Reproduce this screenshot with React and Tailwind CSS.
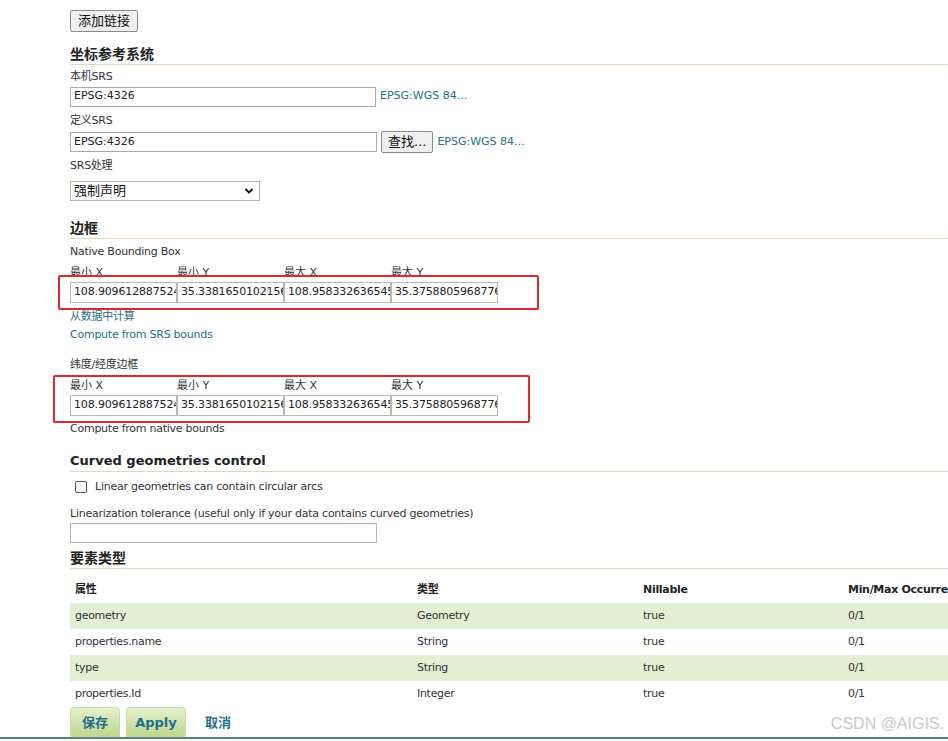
import React from "react"

const font = { fontFamily: '"DejaVu Sans", Verdana, "Noto Sans CJK SC", sans-serif' }

function Label({ children, className = "" }) {
    return (
        <div className={"h-[20px] pt-[2px] flex items-center text-[11px] tracking-[-0.25px] text-[#333] " + className}>
            {children}
        </div>
    )
}

function Heading({ children, className = "" }) {
    return (
        <div className={"h-[21px] flex items-center font-bold text-[#222] border-b border-[#d6dfbd] -mr-[100px] " + className}>
            {children}
        </div>
    )
}

function TextBox({ value, w = "w-[306px]" }) {
    return (
        <div className={"h-[20px] border border-[#a9a9a9] bg-white flex items-center px-[3px] text-[11px] text-[#222] overflow-hidden whitespace-nowrap " + w}>
            {value}
        </div>
    )
}

function BBox() {
    const vals = ["108.909612887524", "35.338165010215667", "108.958332636545", "35.375880596877667"]
    const labels = ["最小 X", "最小 Y", "最大 X", "最大 Y"]
    return (
        <div>
            <div className="flex h-[19px] pt-[2px] items-center text-[11px] text-[#333]">
                {labels.map((l) => (
                    <div key={l} className="w-[107px]">{l}</div>
                ))}
            </div>
            <div className="flex">
                {vals.map((v, i) => (
                    <div
                        key={i}
                        className="w-[107px] h-[21px] border border-[#b8b8b8] bg-white flex items-center pl-[3px] text-[11px] tracking-[-0.15px] text-[#222] overflow-hidden whitespace-nowrap"
                    >
                        {v}
                    </div>
                ))}
            </div>
        </div>
    )
}

const rows = [
    ["geometry", "Geometry", "true", "0/1"],
    ["properties.name", "String", "true", "0/1"],
    ["type", "String", "true", "0/1"],
    ["properties.Id", "Integer", "true", "0/1"],
]

export default function App() {
    return (
        <div className="w-[948px] h-[741px] overflow-hidden bg-white relative" style={font}>
            <div className="pl-[70px] pt-[10px]">
                {/* toolbar */}
                <div className="h-[23px] flex items-start">
                    <button className="h-[22px] px-[7px] border border-[#8a8a8a] rounded-[2px] bg-[#efefef] text-[13px] text-[#111]">
                        添加链接
                    </button>
                </div>

                <Heading className="mt-[11px] text-[14px]">坐标参考系统</Heading>
                <Label className="mt-[1px]">本机SRS</Label>
                <div className="h-[21px] flex items-center gap-[4px]">
                    <TextBox value="EPSG:4326" />
                    <span className="text-[11px] text-[#1f6f8b]">EPSG:WGS 84...</span>
                </div>
                <Label className="mt-[3px]">定义SRS</Label>
                <div className="h-[24px] flex items-center gap-[4px]">
                    <TextBox value="EPSG:4326" w="w-[307px]" />
                    <button className="h-[22px] px-[6px] border border-[#8a8a8a] rounded-[2px] bg-[#efefef] text-[13px] text-[#111]">
                        查找...
                    </button>
                    <span className="text-[11px] text-[#1f6f8b]">EPSG:WGS 84...</span>
                </div>
                <Label className="mt-[1px]">SRS处理</Label>
                <div className="mt-[6px] h-[20px] w-[190px] border border-[#b5b5b5] flex items-center justify-between px-[3px] text-[13px] text-[#111]">
                    <span>强制声明</span>
                    <svg width="10" height="8" viewBox="0 0 10 8" className="mr-[2px]">
                        <path d="M1.5 2 L5 5.5 L8.5 2" stroke="#111" strokeWidth="1.8" fill="none" />
                    </svg>
                </div>

                <Heading className="mt-[17px] text-[14px]">边框</Heading>
                <Label className="mt-[2px]">Native Bounding Box</Label>
                <div className="relative mt-[2px]">
                    <BBox />
                    <div className="absolute left-[-12px] top-[12px] w-[481px] h-[35px] border-2 border-[#e3262e] rounded-[2px]" />
                </div>
                <div className="mt-[5px] h-[18px] flex items-center text-[11px] tracking-[-0.25px] text-[#1f6f8b]">从数据中计算</div>
                <div className="h-[18px] flex items-center text-[11px] tracking-[-0.25px] text-[#1f6f8b]">Compute from SRS bounds</div>
                <Label className="mt-[10px]">纬度/经度边框</Label>
                <div className="relative mt-[2px]">
                    <BBox />
                    <div className="absolute left-[-17px] top-[-1px] w-[477px] h-[48px] border-2 border-[#e3262e] rounded-[2px]" />
                </div>
                <div className="mt-[4px] h-[18px] flex items-center text-[11px] tracking-[-0.25px] text-[#333]">Compute from native bounds</div>

                <Heading className="mt-[13px] text-[13px]">Curved geometries control</Heading>
                <div className="mt-[5px] h-[20px] flex items-center gap-[8px] pl-[5px] text-[11px] tracking-[-0.25px] text-[#333]">
                    <div className="w-[12px] h-[12px] border border-[#555] rounded-[2px] bg-white" />
                    <span>Linear geometries can contain circular arcs</span>
                </div>
                <Label className="mt-[6px]">Linearization tolerance (useful only if your data contains curved geometries)</Label>
                <div className="h-[20px] w-[307px] border border-[#b5b5b5] bg-white" />

                <Heading className="mt-[5px] text-[14px]">要素类型</Heading>

                {/* attribute table, clipped like a scroll pane */}
                <div className="mt-[9px] h-[123px] overflow-hidden -mr-[100px]">
                    <div className="h-[25px] flex items-center font-bold text-[11px] tracking-[-0.3px] text-[#222]">
                        <div className="w-[347px] pl-[5px]">属性</div>
                        <div className="w-[226px]">类型</div>
                        <div className="w-[205px]">Nillable</div>
                        <div className="flex-1 whitespace-nowrap">Min/Max Occurrences</div>
                    </div>
                    {rows.map((r, i) => (
                        <div
                            key={i}
                            className={"h-[26px] flex items-center text-[11px] tracking-[-0.3px] text-[#333] " + (i % 2 === 0 ? "bg-[#e2efd2]" : "bg-white")}
                        >
                            <div className="w-[347px] pl-[5px]">{r[0]}</div>
                            <div className="w-[226px]">{r[1]}</div>
                            <div className="w-[205px]">{r[2]}</div>
                            <div className="flex-1">{r[3]}</div>
                        </div>
                    ))}
                </div>

                {/* form buttons */}
                <div className="mt-[6px] h-[30px] flex items-center gap-[6px]">
                    <button className="h-[30px] w-[50px] pt-[2px] rounded-t-[4px] border border-[#c7dba2] bg-gradient-to-b from-[#e6f0cf] to-[#bdd88f] text-[13px] font-bold text-[#1f6f8b]">
                        保存
                    </button>
                    <button className="h-[30px] w-[60px] pt-[2px] rounded-t-[4px] border border-[#c7dba2] bg-gradient-to-b from-[#e6f0cf] to-[#bdd88f] text-[13px] font-bold text-[#1f6f8b]">
                        Apply
                    </button>
                    <span className="ml-[13px] pt-[2px] text-[13px] font-bold text-[#1f6f8b]">取消</span>
                </div>
            </div>
            <div className="h-[2px] bg-[#4e8a6c]" />
            <div
                className="absolute right-[4px] bottom-[5px] text-[16px] text-[#c9c9c9]"
                style={{ fontFamily: '"Liberation Sans", Arial, sans-serif' }}
            >
                CSDN @AIGIS.
            </div>
        </div>
    )
}
